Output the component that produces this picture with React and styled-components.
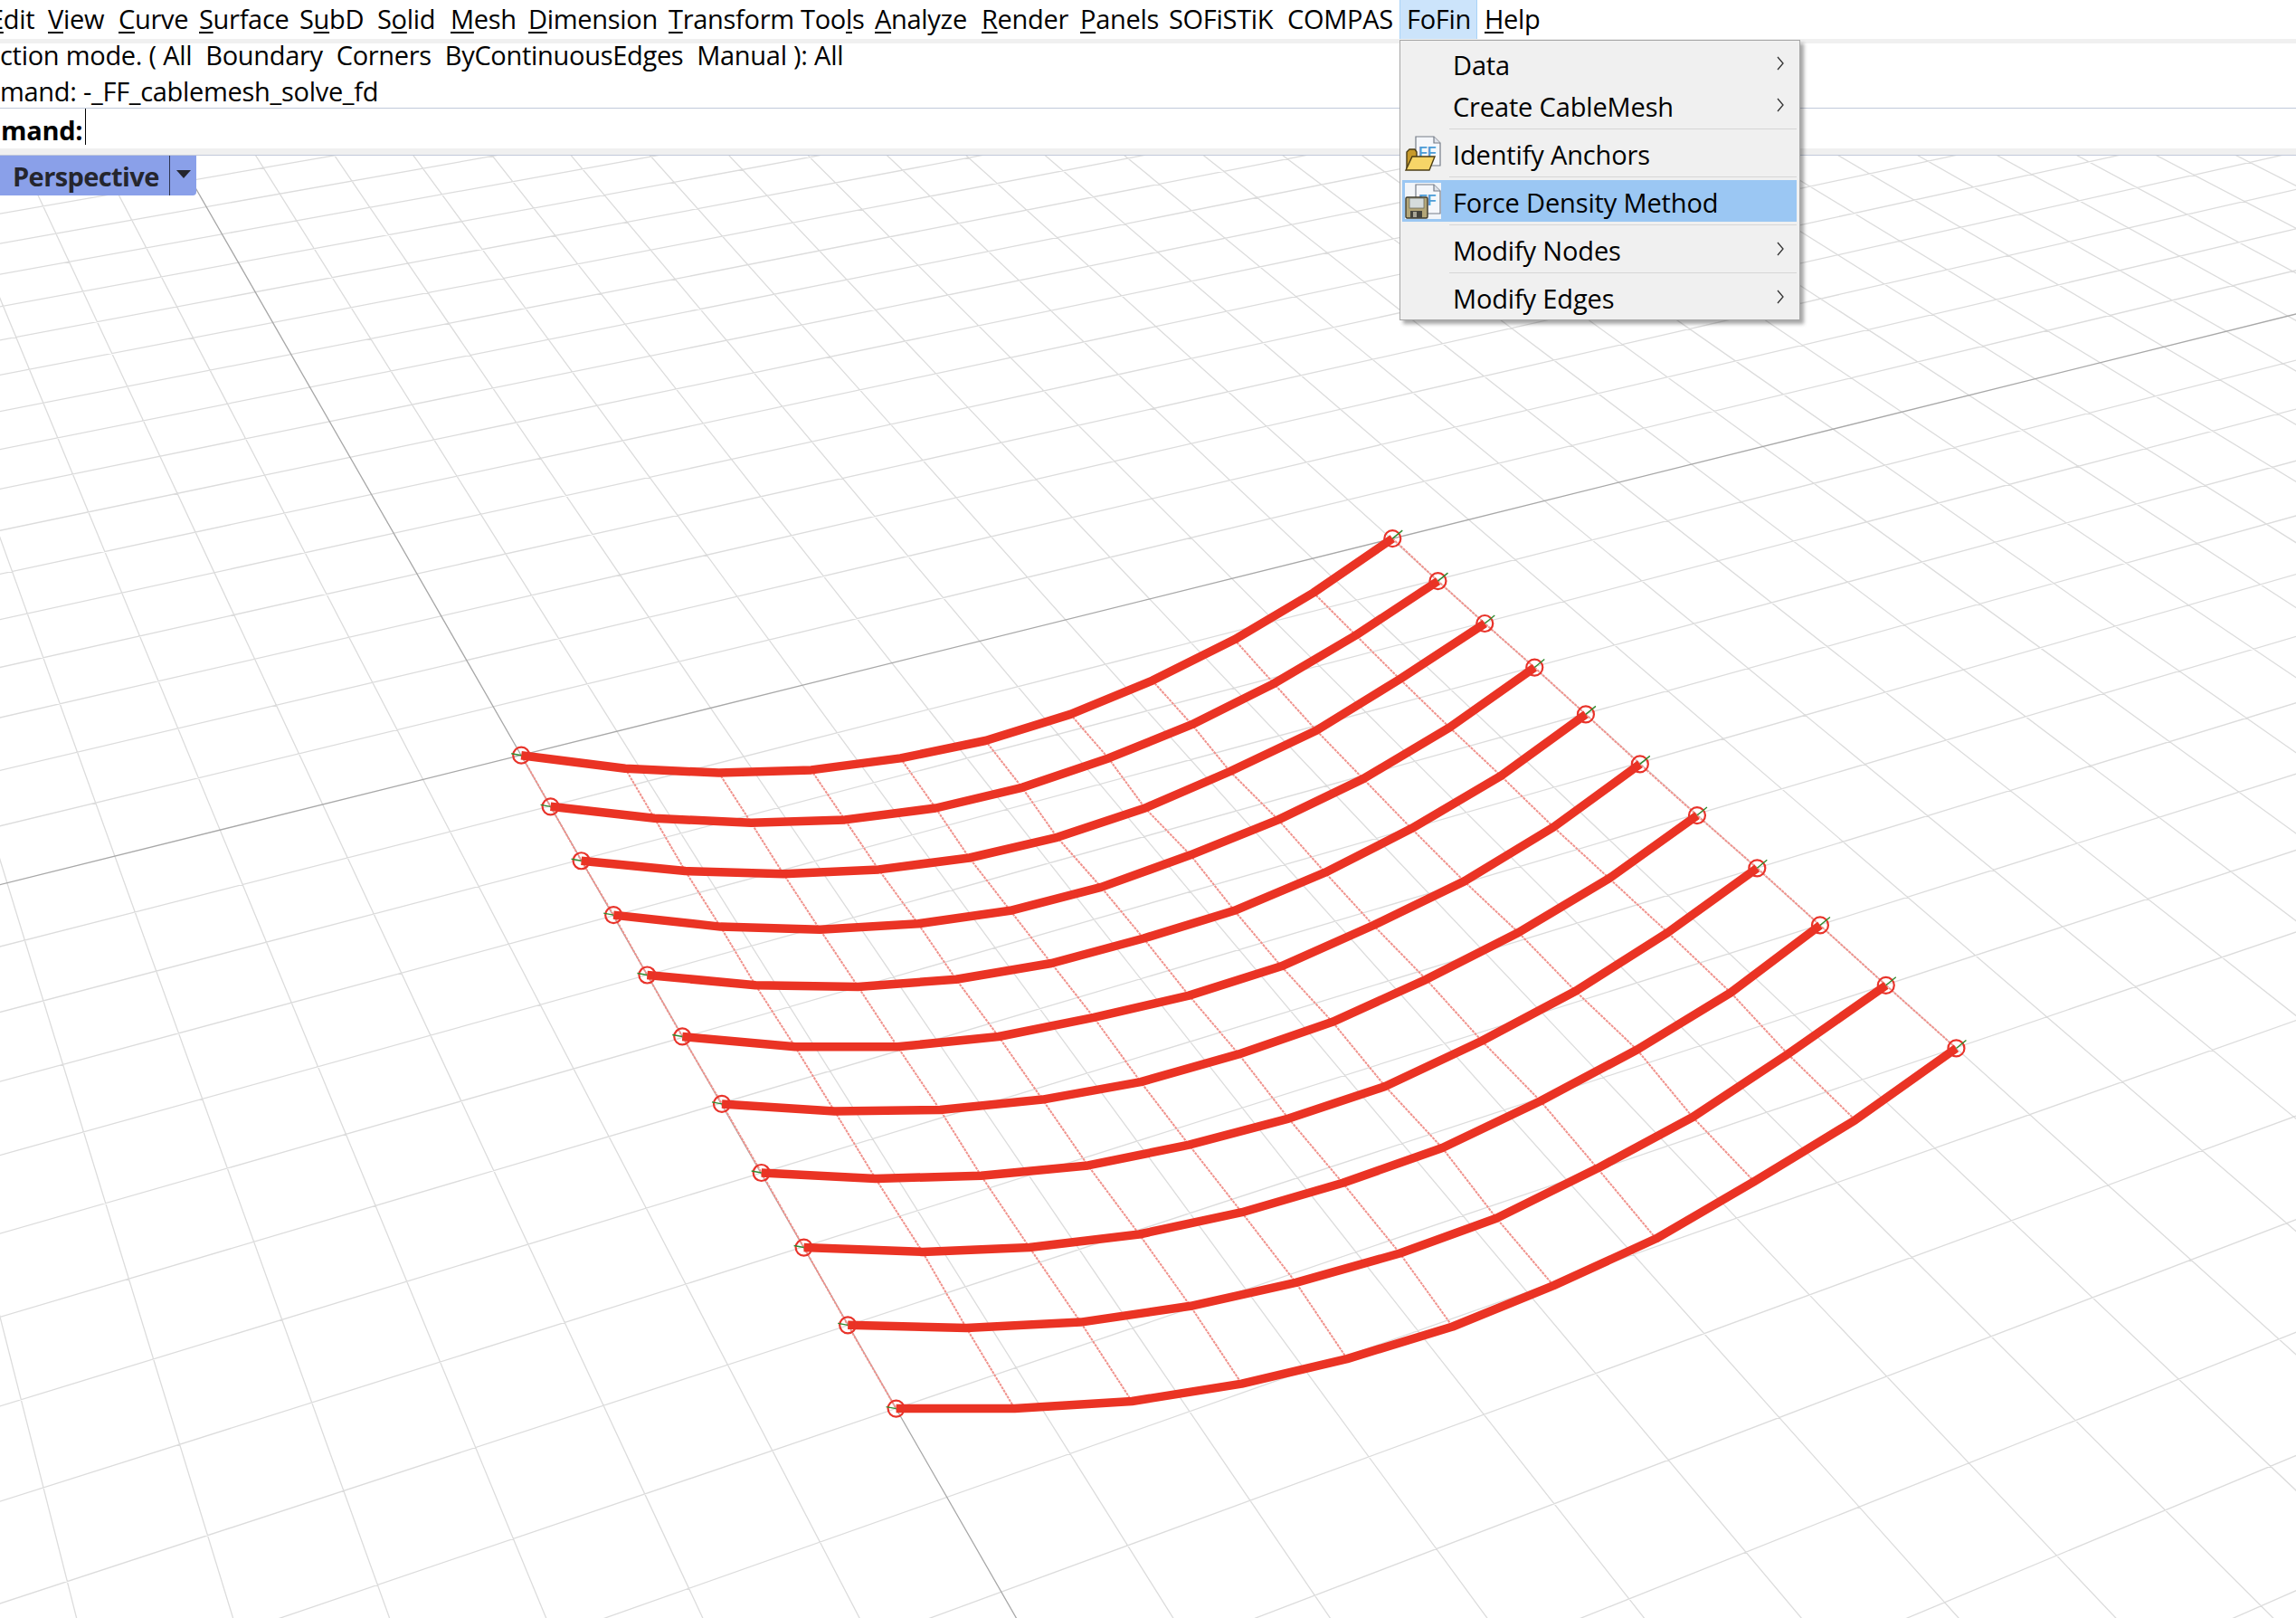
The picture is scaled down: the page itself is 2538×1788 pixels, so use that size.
import React from "react";
import styled, { createGlobalStyle } from "styled-components";

const Global = createGlobalStyle`
  html, body {
    margin: 0;
    padding: 0;
    background: #fff;
    overflow: hidden;
  }
  * {
    box-sizing: border-box;
  }
`;

const Window = styled.div`
  position: relative;
  width: 2538px;
  height: 1788px;
  display: flex;
  flex-direction: column;
  overflow: hidden;
  background: #fff;
  color: #000;
  font-family: "Open Sans", "Noto Sans", sans-serif;
  font-size: 29px;
  letter-spacing: -0.3px;
`;

const MenuBar = styled.div`
  display: flex;
  height: 43px;
  margin-left: -20px;
  flex: none;
`;

const MenuItem = styled.div`
  flex: none;
  width: ${(p) => p.$w}px;
  height: 43px;
  padding-left: 7px;
  line-height: 42px;
  white-space: nowrap;
  border: 1px solid ${(p) => (p.$open ? "#a9d3f7" : "transparent")};
  border-width: 0 1px;
  background: ${(p) => (p.$open ? "#cce4fb" : "transparent")};
`;

const Band = styled.div`
  flex: none;
  height: ${(p) => p.$h}px;
  background: #f0f0f0;
`;

const History = styled.div`
  flex: none;
  height: 72px;
  display: flex;
  flex-direction: column;
  gap: 12px;
  border-bottom: 1px solid #c1c9da;
`;

const HistoryLine = styled.div`
  height: 28px;
  line-height: 26px;
  white-space: pre;
  word-spacing: 0.2px;
`;

const CommandRow = styled.div`
  flex: none;
  height: 44px;
  display: flex;
  align-items: flex-start;
`;

const Prompt = styled.div`
  margin-left: 1px;
  height: 44px;
  line-height: 47px;
  font-weight: 700;
  white-space: pre;
`;

const Caret = styled.div`
  width: 1px;
  height: 40px;
  margin-left: 3px;
  background: #000;
`;

const BottomEdge = styled.div`
  flex: none;
  height: 8px;
  background: #f0f0f0;
  border-bottom: 1px solid #c1c9da;
`;

const Viewport = styled.div`
  position: relative;
  flex: 1;
  min-height: 0;
  background: #fff;
`;

const Scene = styled.svg`
  display: block;
  width: 100%;
  height: 100%;
`;

const ViewTab = styled.div`
  position: absolute;
  left: 0;
  top: 0;
  width: 217px;
  height: 44px;
  display: flex;
  align-items: center;
  background: #8aa0e9;
  border-bottom-right-radius: 4px;
  color: #25262e;
  font-weight: 700;
  letter-spacing: -0.6px;
`;

const TabLabel = styled.div`
  width: 188px;
  height: 44px;
  padding-left: 14px;
  line-height: 46px;
  border-right: 1px solid #2d3350;
  white-space: nowrap;
`;

const TabArrow = styled.div`
  width: 0;
  height: 0;
  margin: -4px 0 0 7px;
  border-left: 8px solid transparent;
  border-right: 8px solid transparent;
  border-top: 9px solid #25262e;
`;

const Dropdown = styled.div`
  position: absolute;
  left: 1547px;
  top: 44px;
  width: 443px;
  height: 310px;
  padding: 2px 3px 1px 2px;
  background: #f0f0f0;
  border: 1px solid #a6a6a6;
  box-shadow: 4px 4px 4px rgba(0, 0, 0, 0.35);
`;

const Row = styled.div`
  height: 46px;
  display: flex;
  align-items: center;
  background: ${(p) => (p.$active ? "#9bc7f3" : "transparent")};
`;

const IconSlot = styled.div`
  flex: none;
  width: 52px;
  height: 46px;
  display: flex;
  align-items: center;
  padding-left: 3px;
`;

const Label = styled.div`
  flex: 1;
  height: 46px;
  padding-left: 4px;
  line-height: 50px;
  letter-spacing: -0.15px;
  white-space: nowrap;
`;

const Chevron = styled.svg`
  flex: none;
  width: 10px;
  height: 16px;
  margin: 0 13px 0 0;
`;

const Sep = styled.div`
  height: 7px;
  padding: 3px 0 3px 52px;
  &::after {
    content: "";
    display: block;
    height: 1px;
    background: #d6d6d6;
  }
`;

const items = [
  ["E", "dit", 65, ""],
  ["V", "iew", 78],
  ["C", "urve", 89],
  ["S", "urface", 111],
  ["", "S", 86, "u", "bD"],
  ["", "S", 81, "o", "lid"],
  ["M", "esh", 86],
  ["D", "imension", 155],
  ["T", "ransform", 146],
  ["", "Too", 82, "l", "s"],
  ["A", "nalyze", 118],
  ["R", "ender", 109],
  ["P", "anels", 98],
  ["", "SOFiSTiK", 131],
  ["", "COMPAS", 132],
  ["", "FoFin", 86],
  ["H", "elp", 100],
];

const Mnemonic = styled.span`
  text-decoration: underline;
  text-decoration-thickness: 2px;
  text-underline-offset: 3px;
`;

// cable nodes read off the picture, in the coordinates of the shrunk reference
const cables = [
  [[356, 516], [427, 525], [491, 528], [554, 526], [615, 518], [673, 506], [731, 488], [787, 465], [843, 437], [897, 405], [951, 368]],
  [[376, 551], [447, 559], [513, 562], [577, 560], [639, 552], [698, 538], [757, 518], [814, 495], [870, 467], [926, 434], [982, 397]],
  [[397, 588], [468, 595], [535, 597], [600, 594], [662, 586], [722, 572], [782, 552], [840, 527], [899, 499], [956, 464], [1014, 426]],
  [[419, 625], [492, 633], [560, 635], [627, 631], [690, 622], [752, 606], [813, 584], [873, 560], [931, 532], [990, 497], [1048, 456]],
  [[442, 666], [516, 673], [586, 674], [653, 669], [718, 658], [781, 641], [843, 622], [905, 596], [964, 566], [1025, 530], [1083, 488]],
  [[466, 708], [543, 715], [613, 715], [682, 708], [747, 695], [812, 680], [875, 660], [938, 632], [1000, 602], [1061, 565], [1120, 522]],
  [[493, 754], [570, 759], [642, 758], [712, 751], [779, 739], [846, 720], [910, 698], [974, 669], [1037, 637], [1099, 600], [1159, 557]],
  [[520, 801], [598, 805], [670, 803], [743, 796], [812, 782], [880, 764], [946, 742], [1012, 711], [1076, 677], [1139, 637], [1200, 593]],
  [[549, 852], [630, 855], [703, 852], [778, 843], [848, 828], [917, 808], [985, 784], [1052, 752], [1118, 717], [1182, 678], [1243, 632]],
  [[579, 905], [660, 907], [738, 903], [813, 892], [885, 876], [956, 856], [1022, 832], [1091, 798], [1156, 763], [1221, 720], [1288, 673]],
  [[612, 962], [693, 962], [773, 957], [848, 945], [920, 928], [992, 906], [1061, 878], [1131, 846], [1198, 807], [1267, 765], [1336, 716]],
].map((c) => c.map(([x, y]) => [x * 1.6186, y * 1.6186]));

// perspective of the construction plane, square 10x10 cells onto four known points
const G = 0.1139;
const H = -0.2395;
const project = (u, v) => {
  const U = u / 10;
  const V = v / 10;
  const w = 1 + G * U + H * V;
  const x = (1538 - 576 + G * 1538) * U + (990.5 - 576 + H * 990.5) * V + 576;
  const y = (596 - 835 + G * 596) * U + (1557 - 835 + H * 1557) * V + 835;
  return [x / w, y / w];
};

const segment = (a, b) => {
  const [x1, y1] = project(a[0], a[1]);
  const [x2, y2] = project(b[0], b[1]);
  return `M${x1.toFixed(1)} ${y1.toFixed(1)}L${x2.toFixed(1)} ${y2.toFixed(1)}`;
};

const maxV = (u) => Math.min(60, ((0.15 - 1 - (G * u) / 10) / H) * 10);
const minU = (v) => ((0.15 - 1 - (H * v) / 10) / G) * 10;

const range = (from, to) => {
  const out = [];
  for (let i = from; i <= to; i++) out.push(i);
  return out;
};

const gridLines = () => {
  let d = "";
  range(-40, 40).forEach((u) => {
    if (u !== 0) d += segment([u, -30], [u, maxV(u)]);
  });
  range(-30, 30).forEach((v) => {
    if (v !== 0) d += segment([Math.max(-40, minU(v)), v], [60, v]);
  });
  return d;
};

const poly = (pts) => pts.map((p) => p.map((n) => n.toFixed(1)).join(" ")).join("L");

const Plane = () => (
  <Scene viewBox="0 173 2538 1615">
    <path d={gridLines()} fill="none" stroke="#dcdcdc" strokeWidth="1.3" />
    <path d={segment([0, -30], [0, maxV(0)]) + segment([-40, 0], [60, 0])} fill="none" stroke="#a8a8a8" strokeWidth="1.3" />
    {range(0, 10).map((i) => (
      <path
        key={i}
        d={"M" + poly(cables.map((c) => c[i]))}
        fill="none"
        stroke="#f0928c"
        strokeWidth="2"
        strokeDasharray="3 1"
      />
    ))}
    {cables.map((c, i) => (
      <g key={i}>
        <path d={"M" + poly(c)} fill="none" stroke="#ea3324" strokeWidth="9.5" strokeLinejoin="round" />
        <circle cx={c[0][0]} cy={c[0][1]} r="9" fill="none" stroke="#e8332a" strokeWidth="2.2" />
        <circle cx={c[10][0]} cy={c[10][1]} r="9" fill="none" stroke="#e8332a" strokeWidth="2.2" />
        <path
          d={`M${c[0][0]} ${c[0][1]}l-11 -2M${c[10][0]} ${c[10][1]}l11 -9`}
          stroke="#2f8a2f"
          strokeWidth="1.4"
        />
      </g>
    ))}
  </Scene>
);

const FFDoc = () => (
  <g>
    <path d="M12 2h20l7 7v25H12z" fill="#f5f7fb" stroke="#767c88" strokeWidth="1.2" />
    <path d="M32 2v7h7" fill="#dfe3ea" stroke="#767c88" strokeWidth="1.2" />
    <text x="15" y="25" fontFamily="'Liberation Sans', sans-serif" fontWeight="700" fontSize="16" letterSpacing="0" fill="#4f9cd6">
      FF
    </text>
  </g>
);

const OpenIcon = () => (
  <svg width="40" height="40" viewBox="0 0 40 40">
    <FFDoc />
    <path d="M2 38V19l3-3h6l2 3v6H9z" fill="#c79a2c" stroke="#4b3d15" strokeWidth="1.4" />
    <path d="M1 39l7-15h25l-6 15z" fill="#f6d568" stroke="#4b3d15" strokeWidth="1.4" />
  </svg>
);

const SaveIcon = () => (
  <svg width="40" height="40" viewBox="0 0 40 40">
    <rect width="40" height="40" fill="#f2f5f9" />
    <FFDoc />
    <rect x="1" y="16" width="24" height="23" rx="1.5" fill="#b3a678" stroke="#3d3a2b" strokeWidth="1.4" />
    <rect x="5" y="17" width="16" height="11" fill="#d5dcdc" stroke="#6d6c5c" strokeWidth="0.8" />
    <rect x="6" y="31" width="13" height="8" fill="#45443c" />
    <rect x="9" y="32" width="4" height="6" fill="#a8a596" />
  </svg>
);

const Arrow = () => (
  <Chevron viewBox="0 0 10 16">
    <path d="M2 1l6 7-6 7" fill="none" stroke="#333" strokeWidth="1.3" />
  </Chevron>
);

export default function App() {
  return (
    <Window>
      <Global />
      <MenuBar>
        {items.map(([under, rest, w, midU, tail]) => (
          <MenuItem key={rest + w} $w={w} $open={rest === "FoFin"}>
            {under && <Mnemonic>{under}</Mnemonic>}
            {rest}
            {midU && <Mnemonic>{midU}</Mnemonic>}
            {tail}
          </MenuItem>
        ))}
      </MenuBar>
      <Band $h={5} />
      <History>
        <HistoryLine>ction mode. ( All  Boundary  Corners  ByContinuousEdges  Manual ): All</HistoryLine>
        <HistoryLine>mand: -_FF_cablemesh_solve_fd</HistoryLine>
      </History>
      <CommandRow>
        <Prompt>mand:</Prompt>
        <Caret />
      </CommandRow>
      <BottomEdge />
      <Viewport>
        <Plane />
        <ViewTab>
          <TabLabel>Perspective</TabLabel>
          <TabArrow />
        </ViewTab>
      </Viewport>
      <Dropdown>
        <Row>
          <IconSlot />
          <Label>Data</Label>
          <Arrow />
        </Row>
        <Row>
          <IconSlot />
          <Label>Create CableMesh</Label>
          <Arrow />
        </Row>
        <Sep />
        <Row>
          <IconSlot>
            <OpenIcon />
          </IconSlot>
          <Label>Identify Anchors</Label>
        </Row>
        <Sep />
        <Row $active>
          <IconSlot>
            <SaveIcon />
          </IconSlot>
          <Label>Force Density Method</Label>
        </Row>
        <Sep />
        <Row>
          <IconSlot />
          <Label>Modify Nodes</Label>
          <Arrow />
        </Row>
        <Sep />
        <Row>
          <IconSlot />
          <Label>Modify Edges</Label>
          <Arrow />
        </Row>
      </Dropdown>
    </Window>
  );
}
